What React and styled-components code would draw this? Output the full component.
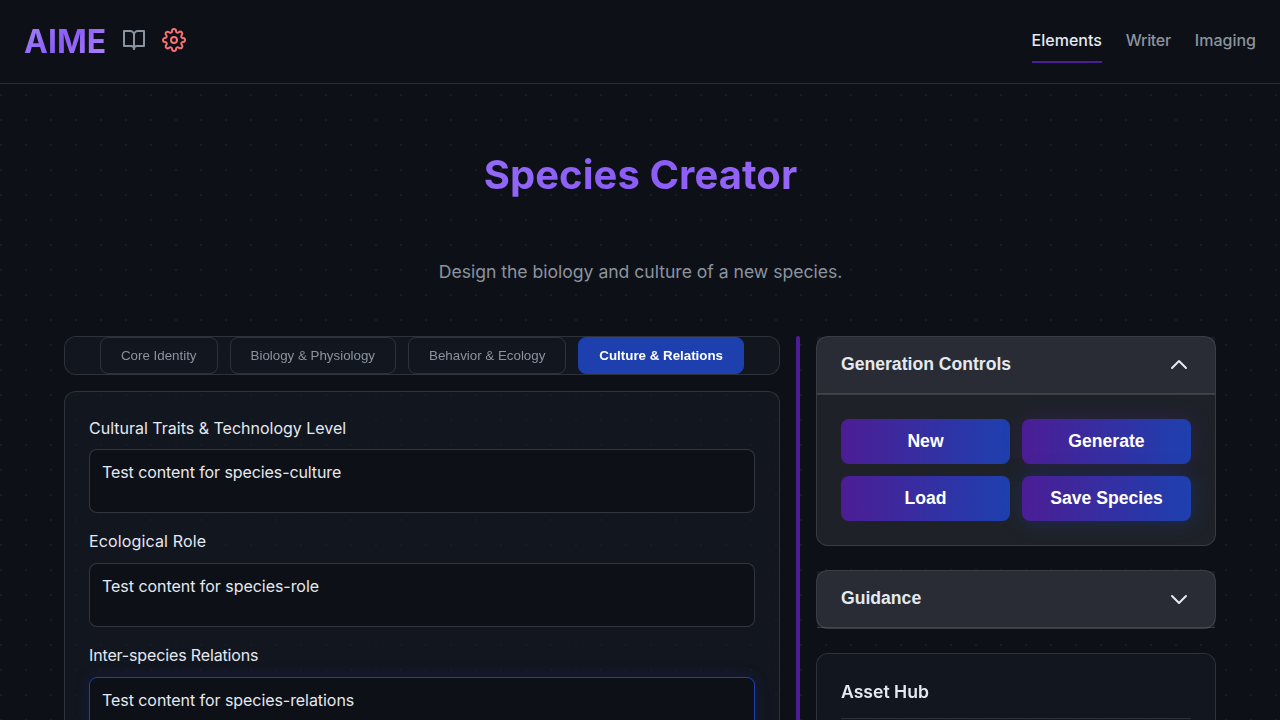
import React from 'react';
import styled, { createGlobalStyle, css } from 'styled-components';

const Global = createGlobalStyle`
  *, *::before, *::after { box-sizing: border-box; }
  html { background: #0d1017; }
  body {
    margin: 0;
    height: 100vh;
    overflow: hidden;
    color: #e5e9f0;
    font-family: Inter, sans-serif;
    font-size: 16px;
    line-height: 1.6;
    background: radial-gradient(circle at 1px 1px, rgba(255, 255, 255, 0.05) 1px, transparent 0) 0 19px / 25px 25px #0d1017;
  }
`;

const Page = styled.div`
  height: 100vh;
  overflow: hidden;
`;

const Header = styled.header`
  display: flex;
  align-items: center;
  justify-content: space-between;
  height: 84px;
  padding: 0 24px;
  background: #0d1017;
  border-bottom: 1px solid rgba(255, 255, 255, 0.12);
`;

const Brand = styled.div`
  display: flex;
  align-items: center;
  gap: 16px;
  margin-bottom: 4px;
`;

const gradientText = css`
  background: linear-gradient(135deg, #a78bfa, #8b5cf6, #b588fb);
  -webkit-background-clip: text;
  background-clip: text;
  color: transparent;
`;

const Logo = styled.span`
  ${gradientText}
  padding-top: 4px;
  font-size: 32px;
  font-weight: 700;
  line-height: 48px;
`;

const HeaderIcon = styled.svg`
  width: 24px;
  height: 24px;
  fill: none;
  stroke: ${(p) => p.$color};
  stroke-width: 2;
  stroke-linecap: round;
  stroke-linejoin: round;
`;

const Nav = styled.nav`
  display: flex;
  gap: 24px;
  margin-bottom: 1px;
`;

const NavLink = styled.a`
  padding: 9px 0 7px;
  font-weight: 500;
  letter-spacing: ${(p) => p.$spacing}px;
  color: ${(p) => (p.$active ? '#e5e9f0' : '#8b949e')};
  border-bottom: 2px solid ${(p) => (p.$active ? '#4c1d95' : 'transparent')};
`;

const Hero = styled.section`
  height: 251.8px;
  padding: 59px 0 0 1px;
  text-align: center;
`;

const Title = styled.h1`
  ${gradientText}
  margin: 0 64px;
  font-size: 40px;
  font-weight: 700;
  line-height: 64px;
  letter-spacing: 0.06px;
`;

const Subtitle = styled.p`
  margin: 51px 0 0;
  font-size: 17.6px;
  line-height: 28px;
  letter-spacing: -0.02px;
  color: #8b949e;
`;

const Columns = styled.main`
  display: grid;
  grid-template-columns: 1fr 4px 400px;
  gap: 16px;
  padding: 0 64px;
`;

const Column = styled.div`
  display: flex;
  flex-direction: column;
  gap: ${(p) => p.$gap}px;
`;

const Divider = styled.div`
  min-height: 600px;
  border-radius: 2px;
  background: #4c1d95;
`;

const Panel = styled.section`
  background: rgba(22, 27, 36, 0.6);
  border: 1px solid rgba(255, 255, 255, 0.12);
  border-radius: 12px;
`;

const TabBar = styled(Panel)`
  display: flex;
  justify-content: center;
  gap: 12px;
  backdrop-filter: blur(10px);
`;

const Tab = styled.button`
  padding: 10px 20px;
  font: ${(p) => (p.$active ? 700 : 400)} 13.3333px 'Liberation Sans', sans-serif;
  line-height: 15px;
  color: ${(p) => (p.$active ? '#fff' : '#8b949e')};
  background: ${(p) => (p.$active ? '#1e40af' : 'transparent')};
  border: 1px solid ${(p) => (p.$active ? '#1e40af' : 'rgba(255, 255, 255, 0.12)')};
  border-radius: 8px;
`;

const FormPanel = styled(Panel)`
  padding: 24px;
`;

const Field = styled.div`
  margin-bottom: 16px;
`;

const Label = styled.label`
  display: block;
  margin-bottom: 8px;
  letter-spacing: ${(p) => p.$spacing}px;
`;

const TextArea = styled.textarea`
  display: block;
  width: 100%;
  height: 64px;
  padding: 11px 12px;
  font: 16px Inter, sans-serif;
  line-height: 22px;
  letter-spacing: ${(p) => p.$spacing}px;
  color: #e5e9f0;
  background: #0d1017;
  border: 1px solid ${(p) => (p.$focused ? '#1e40af' : 'rgba(255, 255, 255, 0.16)')};
  border-radius: 8px;
  box-shadow: ${(p) => (p.$focused ? '0 0 15px rgba(30, 64, 175, 0.2)' : 'none')};
  outline: none;
  resize: none;
`;

const Accordion = styled.section`
  background: #1e2228;
  border: 1px solid rgba(255, 255, 255, 0.12);
  border-radius: 12px;
`;

const AccordionHeader = styled.div`
  display: flex;
  align-items: center;
  justify-content: space-between;
  height: 57px;
  padding: 0 24px;
  font: 700 17.6px/24px 'Liberation Sans', sans-serif;
  background: rgba(150, 150, 175, 0.09);
  border-bottom: 1px solid rgba(255, 255, 255, 0.12);
`;

const AccordionTitle = styled.span`
  padding-bottom: 2px;
`;

const Chevron = styled.svg`
  width: 24px;
  height: 24px;
  fill: none;
  stroke: currentColor;
  stroke-width: 2;
  stroke-linecap: round;
  stroke-linejoin: round;
  transform: ${(p) => (p.$open ? 'rotate(180deg)' : 'none')};
`;

const ButtonGrid = styled.div`
  display: grid;
  grid-template-columns: 1fr 1fr;
  gap: 12px;
  padding: 24px;
  border-top: 1px solid rgba(255, 255, 255, 0.12);
`;

const ActionButton = styled.button`
  height: 45px;
  padding: 0;
  border: 0;
  border-radius: 8px;
  font: 700 17.6px 'Liberation Sans', sans-serif;
  color: #fff;
  background: linear-gradient(90deg, #4c1d95, #1e40af);
  box-shadow: ${(p) => (p.$glow ? `0 0 20px ${p.$glow}` : 'none')};
`;

const HubPanel = styled(Panel)`
  padding: 24px;
  min-height: 200px;
  backdrop-filter: blur(10px);
`;

const HubTitle = styled.h3`
  margin: 0;
  padding-bottom: 12px;
  font-size: 17.6px;
  font-weight: 600;
  line-height: 28px;
  border-bottom: 1px solid rgba(255, 255, 255, 0.12);
`;

const links = [
  { name: 'Elements', spacing: 0 },
  { name: 'Writer', spacing: -0.3 },
  { name: 'Imaging', spacing: 0 },
];
const tabs = ['Core Identity', 'Biology & Physiology', 'Behavior & Ecology', 'Culture & Relations'];
const fields = [
  {
    label: 'Cultural Traits & Technology Level',
    value: 'Test content for species-culture',
    labelSpacing: 0,
    valueSpacing: -0.09,
  },
  {
    label: 'Ecological Role',
    value: 'Test content for species-role',
    labelSpacing: 0.14,
    valueSpacing: -0.04,
  },
  {
    label: 'Inter-species Relations',
    value: 'Test content for species-relations',
    labelSpacing: -0.14,
    valueSpacing: -0.06,
    focused: true,
  },
];
const actions = [
  { name: 'New' },
  { name: 'Generate', glow: 'rgba(76, 29, 149, 0.3)' },
  { name: 'Load' },
  { name: 'Save Species', glow: 'rgba(30, 64, 175, 0.35)' },
];

const ChevronIcon = ({ open }) => (
  <Chevron viewBox="0 0 24 24" $open={open}>
    <path d="M19 9l-7 7-7-7" />
  </Chevron>
);

export default function App() {
  return (
    <Page>
      <Global />
      <Header>
        <Brand>
          <Logo>AIME</Logo>
          <HeaderIcon viewBox="0 0 24 24" $color="#8b949e">
            <path d="M2 3h6a4 4 0 0 1 4 4v14a3 3 0 0 0-3-3H2z" />
            <path d="M22 3h-6a4 4 0 0 0-4 4v14a3 3 0 0 1 3-3h7z" />
          </HeaderIcon>
          <HeaderIcon viewBox="0 0 24 24" $color="#f87171">
            <circle cx="12" cy="12" r="3" />
            <path d="M19.4 15a1.65 1.65 0 0 0 .33 1.82l.06.06a2 2 0 0 1 0 2.83 2 2 0 0 1-2.83 0l-.06-.06a1.65 1.65 0 0 0-1.82-.33 1.65 1.65 0 0 0-1 1.51V21a2 2 0 0 1-2 2 2 2 0 0 1-2-2v-.09A1.65 1.65 0 0 0 9 19.4a1.65 1.65 0 0 0-1.82.33l-.06.06a2 2 0 0 1-2.83 0 2 2 0 0 1 0-2.83l.06-.06a1.65 1.65 0 0 0 .33-1.82 1.65 1.65 0 0 0-1.51-1H3a2 2 0 0 1-2-2 2 2 0 0 1 2-2h.09A1.65 1.65 0 0 0 4.6 9a1.65 1.65 0 0 0-.33-1.82l-.06-.06a2 2 0 0 1 0-2.83 2 2 0 0 1 2.83 0l.06.06a1.65 1.65 0 0 0 1.82.33H9a1.65 1.65 0 0 0 1-1.51V3a2 2 0 0 1 2-2 2 2 0 0 1 2 2v.09a1.65 1.65 0 0 0 1 1.51 1.65 1.65 0 0 0 1.82-.33l.06-.06a2 2 0 0 1 2.83 0 2 2 0 0 1 0 2.83l-.06.06a1.65 1.65 0 0 0-.33 1.82V9a1.65 1.65 0 0 0 1.51 1H21a2 2 0 0 1 2 2 2 2 0 0 1-2 2h-.09a1.65 1.65 0 0 0-1.51 1z" />
          </HeaderIcon>
        </Brand>
        <Nav>
          {links.map(({ name, spacing }, i) => (
            <NavLink key={name} $active={i === 0} $spacing={spacing}>{name}</NavLink>
          ))}
        </Nav>
      </Header>
      <Hero>
        <Title>Species Creator</Title>
        <Subtitle>Design the biology and culture of a new species.</Subtitle>
      </Hero>
      <Columns>
        <Column $gap={16}>
          <TabBar>
            {tabs.map((name, i) => (
              <Tab key={name} $active={i === 3}>{name}</Tab>
            ))}
          </TabBar>
          <FormPanel>
            {fields.map(({ label, value, labelSpacing, valueSpacing, focused }) => (
              <Field key={label}>
                <Label $spacing={labelSpacing}>{label}</Label>
                <TextArea $focused={focused} $spacing={valueSpacing} defaultValue={value} />
              </Field>
            ))}
          </FormPanel>
        </Column>
        <Divider />
        <Column $gap={24}>
          <Accordion>
            <AccordionHeader>
              <AccordionTitle>Generation Controls</AccordionTitle>
              <ChevronIcon open />
            </AccordionHeader>
            <ButtonGrid>
              {actions.map(({ name, glow }) => (
                <ActionButton key={name} $glow={glow}>{name}</ActionButton>
              ))}
            </ButtonGrid>
          </Accordion>
          <Accordion>
            <AccordionHeader>
              <AccordionTitle>Guidance</AccordionTitle>
              <ChevronIcon />
            </AccordionHeader>
          </Accordion>
          <HubPanel>
            <HubTitle>Asset Hub</HubTitle>
          </HubPanel>
        </Column>
      </Columns>
    </Page>
  );
}
